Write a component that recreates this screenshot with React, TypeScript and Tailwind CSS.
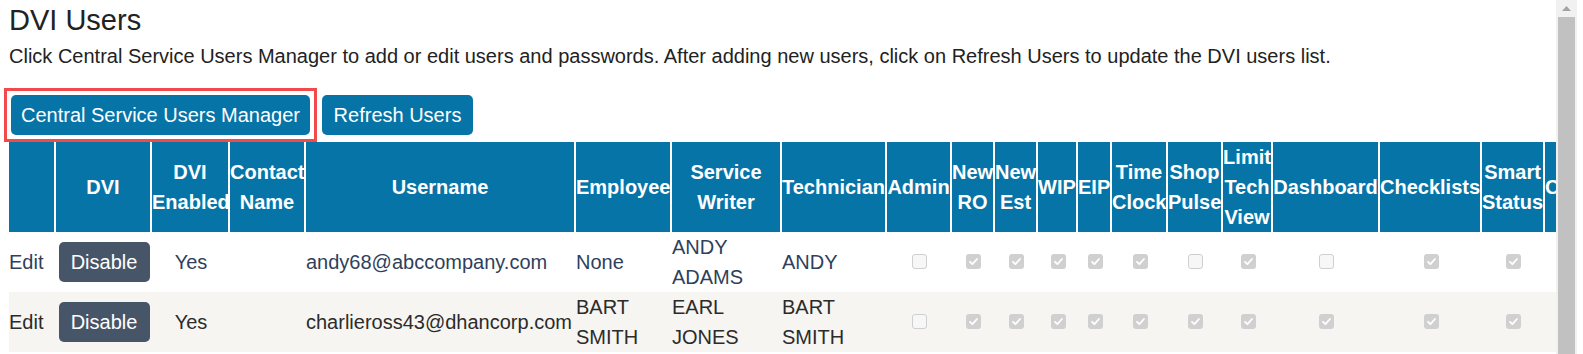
import React from 'react';

type Cell =
  | { kind: 'edit' }
  | { kind: 'button'; label: string }
  | { kind: 'center'; text: string }
  | { kind: 'text'; text: string }
  | { kind: 'check'; checked: boolean }
  | { kind: 'empty' };

const columns = [
  { title: '', width: 'w-[47px]' },
  { title: 'DVI', width: 'w-[96px]' },
  { title: 'DVI Enabled', width: 'w-[78px]' },
  { title: 'Contact Name', width: 'w-[76px]' },
  { title: 'Username', width: 'w-[270px]' },
  { title: 'Employee', width: 'w-[96px]' },
  { title: 'Service Writer', width: 'w-[110px]' },
  { title: 'Technician', width: 'w-[105px]' },
  { title: 'Admin', width: 'w-[65px]' },
  { title: 'New RO', width: 'w-[43px]' },
  { title: 'New Est', width: 'w-[43px]' },
  { title: 'WIP', width: 'w-[40px]' },
  { title: 'EIP', width: 'w-[34px]' },
  { title: 'Time Clock', width: 'w-[56px]' },
  { title: 'Shop Pulse', width: 'w-[55px]' },
  { title: 'Limit Tech View', width: 'w-[50px]' },
  { title: 'Dashboard', width: 'w-[107px]' },
  { title: 'Checklists', width: 'w-[102px]' },
  { title: 'Smart Status', width: 'w-[63px]' },
  { title: 'Concerns', width: 'w-[94px]' },
];

const checks = (values: boolean[]): Cell[] => values.map((checked) => ({ kind: 'check', checked }));

const rows: { bg: string; color: string; cells: Cell[] }[] = [
  {
    bg: 'bg-white',
    color: 'text-[#2f3f5c]',
    cells: [
      { kind: 'edit' },
      { kind: 'button', label: 'Disable' },
      { kind: 'center', text: 'Yes' },
      { kind: 'empty' },
      { kind: 'text', text: 'andy68@abccompany.com' },
      { kind: 'text', text: 'None' },
      { kind: 'text', text: 'ANDY ADAMS' },
      { kind: 'text', text: 'ANDY' },
      ...checks([false, true, true, true, true, true, false, true, false, true, true]),
      { kind: 'empty' },
    ],
  },
  {
    bg: 'bg-[#f6f5f2]',
    color: 'text-[#2b2b2b]',
    cells: [
      { kind: 'edit' },
      { kind: 'button', label: 'Disable' },
      { kind: 'center', text: 'Yes' },
      { kind: 'empty' },
      { kind: 'text', text: 'charlieross43@dhancorp.com' },
      { kind: 'text', text: 'BART SMITH' },
      { kind: 'text', text: 'EARL JONES' },
      { kind: 'text', text: 'BART SMITH' },
      ...checks([false, true, true, true, true, true, true, true, true, true, true]),
      { kind: 'empty' },
    ],
  },
];

function CheckBox({ checked }: { checked: boolean }) {
  if (!checked) {
    return <span className="inline-block h-[15px] w-[15px] rounded-[3px] border border-[#cfcfcf] bg-[#f7f7f7] align-middle" />;
  }
  return (
    <span className="inline-flex h-[15px] w-[15px] items-center justify-center rounded-[3px] bg-[#d0d0d0] align-middle">
      <svg width="11" height="11" viewBox="0 0 11 11" fill="none">
        <path d="M2 5.8 4.4 8.2 9 3" stroke="white" strokeWidth="1.8" strokeLinecap="round" strokeLinejoin="round" />
      </svg>
    </span>
  );
}

function BodyCell({ cell }: { cell: Cell }) {
  const base = 'h-[60px] p-0 align-middle';
  switch (cell.kind) {
    case 'edit':
      return <td className={`${base} text-left`}>Edit</td>;
    case 'button':
      return (
        <td className={`${base} text-center`}>
          <button className="h-10 w-[91px] rounded-[5px] bg-[#465568] text-[20px] leading-[30px] text-white">{cell.label}</button>
        </td>
      );
    case 'center':
      return <td className={`${base} text-center`}>{cell.text}</td>;
    case 'text':
      return <td className={`${base} text-left`}>{cell.text}</td>;
    case 'check':
      return (
        <td className={`${base} text-center`}>
          <span className="relative -top-[2px]">
            <CheckBox checked={cell.checked} />
          </span>
        </td>
      );
    default:
      return <td className={base} />;
  }
}

export default function App() {
  return (
    <div className="flex h-[354px] w-full overflow-hidden bg-white font-['Liberation_Sans',Arial,sans-serif]">
      <main className="min-w-0 flex-1 overflow-hidden pl-[9px]">
        <h1 className="pt-[2px] text-[29px] leading-[36px] font-normal text-[#222]">DVI Users</h1>
        <p className="mt-[3px] text-[20px] leading-[30px] text-[#222]">
          Click Central Service Users Manager to add or edit users and passwords. After adding new users, click on Refresh Users to update the DVI users list.
        </p>

        <div className="mt-[17px] flex items-center">
          <div className="-ml-[5px] border-[3px] border-[#f24a4a] p-1">
            <button className="h-10 w-[299px] rounded-[5px] bg-[#0774a7] text-center text-[20px] leading-[30px] text-white">
              Central Service Users Manager
            </button>
          </div>
          <button className="ml-[5px] h-10 w-[151px] rounded-[5px] bg-[#0774a7] text-center text-[20px] leading-[30px] text-white">
            Refresh Users
          </button>
        </div>

        <table className="w-[1630px] table-fixed border-separate border-spacing-0 text-[20px] leading-[30px]">
          <colgroup>
            {columns.map((c, i) => (
              <col key={i} className={c.width} />
            ))}
          </colgroup>
          <thead>
            <tr>
              {columns.map((c, i) => (
                <th
                  key={i}
                  className="h-[90px] border-r-2 border-white bg-[#0774a7] p-0 text-center align-middle font-bold text-white"
                >
                  {c.title}
                </th>
              ))}
            </tr>
          </thead>
          <tbody>
            {rows.map((row, r) => (
              <tr key={r} className={`${row.bg} ${row.color}`}>
                {row.cells.map((cell, i) => (
                  <BodyCell key={i} cell={cell} />
                ))}
              </tr>
            ))}
          </tbody>
        </table>
      </main>

      {/* scrollbar */}
      <div className="flex w-[21px] shrink-0 flex-col items-center bg-[#f1f1f1]">
        <div className="flex h-[17px] w-full items-center justify-center">
          <svg width="9" height="5" viewBox="0 0 9 5">
            <polygon points="4.5,0 9,5 0,5" fill="#a3a3a3" />
          </svg>
        </div>
        <div className="w-[17px] flex-1 bg-[#c1c1c1]" />
      </div>
      <div className="w-[6px] shrink-0 bg-white" />
    </div>
  );
}
